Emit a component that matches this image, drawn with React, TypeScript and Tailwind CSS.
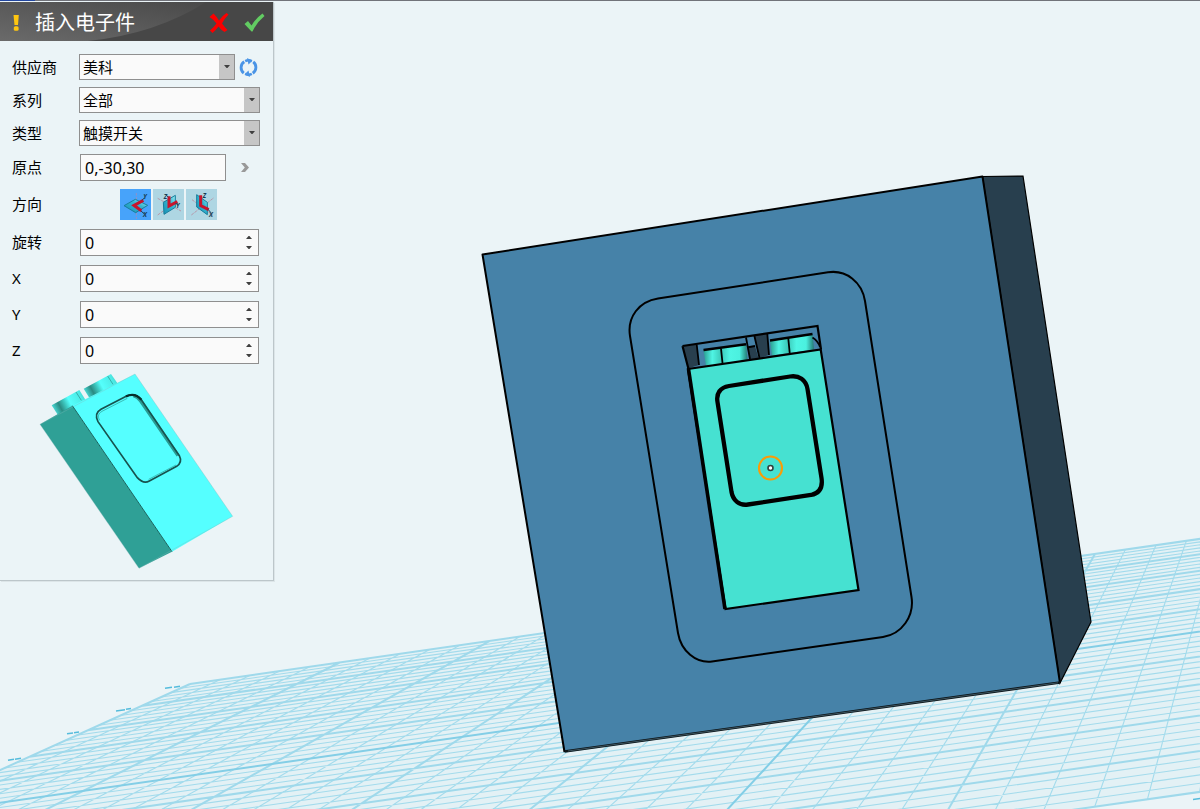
import { useState } from "react";
import type { ReactNode } from "react";

const FIELD = "border border-[#8f8f8f] bg-[#fafafa]";

// Plane of the work grid: major column / row -> point on the canvas
function project(c: number, r: number) {
  const w = 1 - 0.001552 * c - 0.041686 * r;
  const x = (190 + 149.13 * c - 54.71 * r) / w;
  const y = (684 - 22.53 * c - 7.314 * r) / w;
  return `${x.toFixed(1)} ${y.toFixed(1)}`;
}

function gridPath(kind: "minor" | "major" | "axis") {
  let d = "";
  for (let i = 0; i <= 50; i++) {
    const type = i === 25 ? "axis" : i % 5 === 0 ? "major" : "minor";
    if (type !== kind) continue;
    const k = i / 5;
    d += `M${project(0, k)}L${project(10, k)}M${project(k, 0)}L${project(k, 10)}`;
  }
  return d;
}

function Scene() {
  return (
    <svg
      viewBox="0 0 1200 809"
      preserveAspectRatio="xMinYMin slice"
      className="absolute inset-0 h-full w-full"
      aria-hidden="true"
    >
      <defs>
        <linearGradient id="stud" x1="0" x2="1" y1="0" y2="0">
          <stop offset="0" stopColor="#2a9d90" />
          <stop offset="0.2" stopColor="#4ff5e4" />
          <stop offset="0.4" stopColor="#3bc9b9" />
          <stop offset="0.6" stopColor="#4ff5e4" />
          <stop offset="0.82" stopColor="#4bf0df" />
          <stop offset="1" stopColor="#237a73" />
        </linearGradient>
      </defs>

      {/* Grid */}
      <path
        d={`M${project(0, 0)}L${project(10, 0)}L${project(10, 10)}L${project(0, 10)}Z`}
        fill="#e3f1f5"
      />
      <g fill="none">
        <path d={gridPath("minor")} stroke="#a3dbec" strokeWidth="1.1" />
        <path d={gridPath("major")} stroke="#9fd9eb" strokeWidth="2" />
        <path d={gridPath("axis")} stroke="#83cee6" strokeWidth="2" />
      </g>
      <path
        d="M165 688.3l7-1M174 687.2l6-.9M116 711l9-1.3M126 709.3l5-.8M67 733.8l6-.9M74 732.8l5-.8M8 760.2l6-.9M15 759.2l6-.9M1193 799.5l7-1"
        stroke="#56bcdc"
        strokeWidth="1.5"
        fill="none"
      />

      {/* Block */}
      <path d="M982.5 176.5L1023 176L1091 622L1060 683Z" fill="#283f4e" stroke="#000" strokeWidth="1.2" />
      <path d="M482.5 254.5L982.5 176.5L1060 683L564.5 752Z" fill="#4682a8" />
      <path d="M564.5 752L482.5 254.5L982.5 176.5L1060 683" fill="none" stroke="#000" strokeWidth="2" strokeLinejoin="round" />
      <path d="M564.5 751.5L1060 682.5" stroke="#0c1519" strokeWidth="2.6" />
      <path d="M568 751L1058 682.800" stroke="#4a6672" strokeWidth="0.800" />
      <path
        d="M630 336C627 317 639 301.500 658 298.500L828 272.300C846 269.500 862 282 865 301L911.500 597C914.500 616 902 634 883 637L712 661.500C696 663.500 681 651 678 633Z"
        fill="none"
        stroke="#000"
        strokeWidth="2"
      />

      {/* Pocket and studs */}
      <path d="M682.500 346L696.700 344.500L699 365L688 368.500Z" fill="#283f4e" />
      <path d="M754.300 335.500L767.300 333.800L769 355L759.500 358Z" fill="#283f4e" />
      <path d="M747.300 347.500L755 346L758.500 358L750 359.500Z" fill="#283f4e" />
      <path d="M703.500 350L746 344.300L747.500 360L706 366Z" fill="url(#stud)" />
      <path d="M770 340.500L812.500 334L814 349.500L772 355.500Z" fill="url(#stud)" />
      <g fill="none" stroke="#000">
        <path d="M682.500 346L817.500 326L821 349.500M682.500 346L688.500 369" strokeWidth="2.2" />
        <path d="M703.500 350L746 344.300M770 340.500L812.500 334" strokeWidth="2.400" />
        <path d="M721 348.500L722.500 363M788.300 338.500L789.700 353M696.700 344.500L699 365M746 337.500L750 359M754.300 335.500L759.500 358M767.300 333.800L769 355M747 347.500L755 346M812.500 337.500Q818 341 820 347" strokeWidth="1.800" />
      </g>

      {/* Touch switch */}
      <path d="M688 369L820.700 349.500L858.500 590L725.500 609Z" fill="#46e1d1" stroke="#000" strokeWidth="2.2" />
      <path d="M688.500 369L725 609" stroke="#000" strokeWidth="3.600" />
      <path
        d="M717.500 402C716 393 720 387.500 729 386L790 376.500C799 375 806 380 807.500 389L821.500 478C823 488 819 493.500 811 495L748 504.500C739 506 733 500 731.500 492Z"
        fill="none"
        stroke="#000"
        strokeWidth="4.300"
      />
      <circle cx="770.500" cy="468" r="11.500" fill="none" stroke="#f99c08" strokeWidth="2.100" />
      <circle cx="770.500" cy="468" r="2.500" fill="#fff" stroke="#33413f" strokeWidth="1.600" />
    </svg>
  );
}

function Preview() {
  return (
    <svg viewBox="0 0 819 645" className="block w-full" role="img" aria-label="触摸开关">
      <defs>
        <linearGradient id="peg" x1="0" y1="0.600" x2="1" y2="0.200">
          <stop offset="0" stopColor="#49dcd8" />
          <stop offset="0.200" stopColor="#2a8a82" />
          <stop offset="0.350" stopColor="#3cc4bc" />
          <stop offset="0.500" stopColor="#55fffc" />
          <stop offset="0.850" stopColor="#4be9e4" />
          <stop offset="1" stopColor="#3fc9c2" />
        </linearGradient>
      </defs>
      <path d="M155 121L238 75L260 110L177 155Z" fill="url(#peg)" />
      <path d="M251 71L333 27L356 60L272 105Z" fill="url(#peg)" />
      <path d="M228 81L244 106M323 33L339 58" stroke="#2b8f8a" strokeWidth="2" />
      <path d="M120 178L217 122L516 560L417 610Z" fill="#2fa096" />
      <path d="M217 122L405 27L698 454L516 560Z" fill="#55ffff" />
      <path d="M217 122L516 560" stroke="#17635d" strokeWidth="3" />
      <path d="M405 27L698 454L417 610L120 178Z" fill="none" stroke="#7fb5b5" strokeWidth="1" />
      <path d="M400 92Q412 94 422 108L534 272" fill="none" stroke="#2a9b93" strokeWidth="10" />
      <path
        d="M294 170C285 152 289 141 303 133L380 93Q405 82 424 104L538 272Q548 292 530 304L448 348Q430 358 412 338Z"
        fill="none"
        stroke="#17534f"
        strokeWidth="5"
      />
      <path d="M378 94Q405 82 424 104" fill="none" stroke="#062f2c" strokeWidth="7" />
      <path d="M299 166C292 153 295 146 306 139L382 100M528 300L446 343" fill="none" stroke="#2a9b93" strokeWidth="2" />
    </svg>
  );
}

function Caret({ up = false }: { up?: boolean }) {
  return (
    <svg viewBox="0 0 6 3" className="h-[3px] w-1.5" fill="#404040" aria-hidden="true">
      {up ? <path d="M0 3L3 -.5L6 3Z" /> : <path d="M0 0L3 3.500L6 0Z" />}
    </svg>
  );
}

function Row({ id, label, children }: { id: string; label: string; children: ReactNode }) {
  return (
    <div className="flex items-center">
      <label htmlFor={id} className="w-17 shrink-0 text-[15px]">
        {label}
      </label>
      {children}
    </div>
  );
}

function Dropdown({ id, options }: { id: string; options: string[] }) {
  return (
    <div className={`relative -ml-px h-[26px] min-w-0 flex-1 ${FIELD}`}>
      <select id={id} className="block h-full w-full appearance-none pr-4 pl-[3px] text-[15px] leading-6 outline-none">
        {options.map((o) => (
          <option key={o}>{o}</option>
        ))}
      </select>
      <span className="pointer-events-none absolute inset-y-0 right-0 flex w-[15px] justify-center bg-[#c6c6c6] pt-[10px]">
        <Caret />
      </span>
    </div>
  );
}

function Spinner({ id, label }: { id: string; label: string }) {
  const [valor, setValor] = useState(0);
  return (
    <Row id={id} label={label}>
      <div className={`mr-px flex h-[27px] min-w-0 flex-1 ${FIELD}`}>
        <input
          id={id}
          type="number"
          value={valor}
          onChange={(e) => setValor(Number(e.target.value))}
          className="min-w-0 flex-1 pt-px pl-1 text-base leading-6 outline-none [appearance:textfield] [&::-webkit-inner-spin-button]:appearance-none"
        />
        <div className="flex w-[19px] flex-col py-0.5">
          <button type="button" aria-label={`${label} +`} onClick={() => setValor(valor + 1)} className="flex flex-1 items-center justify-center">
            <Caret up />
          </button>
          <button type="button" aria-label={`${label} -`} onClick={() => setValor(valor - 1)} className="flex flex-1 items-center justify-center">
            <Caret />
          </button>
        </div>
      </div>
    </Row>
  );
}

const planes = [
  {
    name: "XY",
    icon: (
      <>
        <path d="M49 12V90" stroke="#b48aae" strokeWidth="2" strokeDasharray="8 4" />
        <path d="M12 50L46 31L83 49L47 71Z" fill="url(#plane)" stroke="#187d9c" strokeWidth="3" />
        <path d="M70 34L42 49L64 65" fill="none" stroke="#c8142c" strokeWidth="9" />
        <path d="M66 34L74 26M62 65L72 74" stroke="#173e55" strokeWidth="3" />
        <text x="70" y="29">Y</text>
        <text x="69" y="83">X</text>
      </>
    ),
  },
  {
    name: "YZ",
    icon: (
      <>
        <path d="M14 28L84 66M14 78L50 52" stroke="#b9788c" strokeWidth="2" strokeDasharray="9 3" />
        <path d="M31 40L67 19V55L33 76Z" fill="url(#plane)" stroke="#187d9c" strokeWidth="3" />
        <path d="M48 22V51L73 38" fill="none" stroke="#c8142c" strokeWidth="9" />
        <path d="M46 24L40 19M68 42L74 48" stroke="#173e55" strokeWidth="3" />
        <text x="32" y="29">Z</text>
        <text x="69" y="57">Y</text>
      </>
    ),
  },
  {
    name: "XZ",
    icon: (
      <>
        <path d="M16 78L84 26M18 32L80 78" stroke="#b9788c" strokeWidth="2" strokeDasharray="9 3" />
        <path d="M32 17L64 40V77L32 54Z" fill="url(#plane)" stroke="#187d9c" strokeWidth="3" />
        <path d="M44 19V50L68 62" fill="none" stroke="#c8142c" strokeWidth="9" />
        <path d="M66 61L74 70" stroke="#173e55" strokeWidth="3" />
        <text x="50" y="28">Z</text>
        <text x="69" y="83">X</text>
      </>
    ),
  },
];

export default function App() {
  const [plane, setPlane] = useState("XY");

  return (
    <main className="relative min-h-screen overflow-hidden bg-[#ebf4f7] font-['Noto_Sans','Noto_Sans_CJK_SC',sans-serif] text-black">
      <Scene />
      <div className="relative flex h-px bg-[#71737a]">
        <span className="w-[35px] bg-[#2347a0]" />
      </div>

      <form
        className="relative mt-px w-[274px] border-r border-b border-[#bcc6ca] bg-[#ebf4f7] shadow-[1px_1px_0_#dce5e8]"
        onSubmit={(e) => e.preventDefault()}
      >
        <header className="relative flex h-[39px] items-center overflow-hidden bg-[#474747] pt-0.5">
          <svg viewBox="0 0 273 39" preserveAspectRatio="none" className="absolute inset-0 h-full w-full" aria-hidden="true">
            <defs>
              <linearGradient id="gloss" x1="0" y1="1" x2="0.900" y2="0">
                <stop offset="0" stopColor="#6a6a6a" />
                <stop offset="1" stopColor="#4b4b4b" />
              </linearGradient>
            </defs>
            <path d="M0 0H206Q156 32 88 39H0Z" fill="url(#gloss)" />
          </svg>
          <svg viewBox="0 0 8 16" className="relative ml-3 h-4 w-2" fill="#ffc610" aria-hidden="true">
            <path d="M1.500 0H6.800L6 10H2.500Z" />
            <rect x="1.800" y="11.300" width="4.800" height="4.500" rx="1.500" />
          </svg>
          <h1 className="relative ml-[15px] flex-1 text-xl text-white">插入电子件</h1>
          <button type="button" aria-label="取消" className="relative">
            <svg viewBox="0 0 20 20" className="h-5 w-5" fill="#fb0000">
              <path d="M.5 4L4.500 .5Q8 4 10 7.500Q13 3 17.500 0L19.500 1.500Q15.500 5.500 13 10.500Q16 14.500 18.500 17L15.500 19Q12 17 9.500 13.500Q7 17 3.500 20L1 17.500Q5 14 7.500 10.500Q4.500 6.500 .5 4Z" />
            </svg>
          </button>
          <button type="submit" aria-label="确定" className="relative mr-2 ml-[15px]">
            <svg viewBox="0 0 21 19" className="h-[19px] w-[21px]" fill="#62cc62">
              <path d="M.5 11L4 8L7.500 12.500Q12 5 18.500 .5L20.500 3Q13 9 8.500 18.500H7.500Z" />
            </svg>
          </button>
        </header>

        <div className="pt-[13px] pr-[13px] pl-3">
          <div className="flex flex-col gap-[7px]">
            <Row id="supplier" label="供应商">
              <Dropdown id="supplier" options={["美科"]} />
              <button type="button" aria-label="刷新" className="mr-0.5 ml-1">
                <svg viewBox="0 0 20 20" className="h-[19px] w-[19px]" fill="none" stroke="#4a94e6" strokeWidth="3">
                  <path d="M5 15.800A7.300 7.300 0 0 1 5.500 4M15 4.200A7.300 7.300 0 0 1 14.500 16" />
                  <path d="M6.500 3.300Q10 1.500 13.500 3.300M13.500 16.700Q10 18.500 6.500 16.700" strokeWidth="2.600" />
                  <path d="M8.500 0L14 3L10 6.800ZM11.500 20L6 17L10 13.200Z" fill="#4a94e6" stroke="none" />
                </svg>
              </button>
            </Row>
            <Row id="series" label="系列">
              <Dropdown id="series" options={["全部"]} />
            </Row>
            <Row id="type" label="类型">
              <Dropdown id="type" options={["触摸开关"]} />
            </Row>
          </div>

          <div className="mt-2 flex flex-col gap-2">
            <Row id="origin" label="原点">
              <input
                id="origin"
                defaultValue="0,-30,30"
                className={`h-[27px] w-[146px] pt-px pl-1 text-base leading-6 outline-none ${FIELD}`}
              />
              <button type="button" aria-label="选取原点" className="ml-[15px]">
                <svg viewBox="0 0 8 9" className="h-[9px] w-2" fill="#999">
                  <path d="M0 0H4L8 4.500L4 9H0L3.800 4.500Z" />
                </svg>
              </button>
            </Row>
            <div className="flex items-center" role="group" aria-labelledby="direction">
              <span id="direction" className="w-27 text-[15px]">
                方向
              </span>
              <svg className="absolute h-0 w-0" aria-hidden="true">
                <defs>
                  <linearGradient id="plane" x1="0" y1="1" x2="1" y2="0">
                    <stop offset="0" stopColor="#1590b4" />
                    <stop offset="0.600" stopColor="#35b5d1" />
                    <stop offset="1" stopColor="#a3eef3" />
                  </linearGradient>
                </defs>
              </svg>
              <div className="flex gap-0.5">
                {planes.map((p) => (
                  <button
                    key={p.name}
                    type="button"
                    aria-label={p.name}
                    aria-pressed={plane === p.name}
                    onClick={() => setPlane(p.name)}
                    className={plane === p.name ? "bg-[#47a3fa]" : "bg-[#aed6e3]"}
                  >
                    <svg viewBox="0 0 93 93" className="h-[31px] w-[31px]" fill="#173e55" fontSize="19" fontWeight="700" fontStyle="italic">
                      {p.icon}
                    </svg>
                  </button>
                ))}
              </div>
            </div>
          </div>

          <div className="mt-[9px] flex flex-col gap-[9px]">
            <Spinner id="rotation" label="旋转" />
            <Spinner id="x" label="X" />
            <Spinner id="y" label="Y" />
            <Spinner id="z" label="Z" />
          </div>
        </div>

        <div className="pt-px">
          <Preview />
        </div>
      </form>
    </main>
  );
}
